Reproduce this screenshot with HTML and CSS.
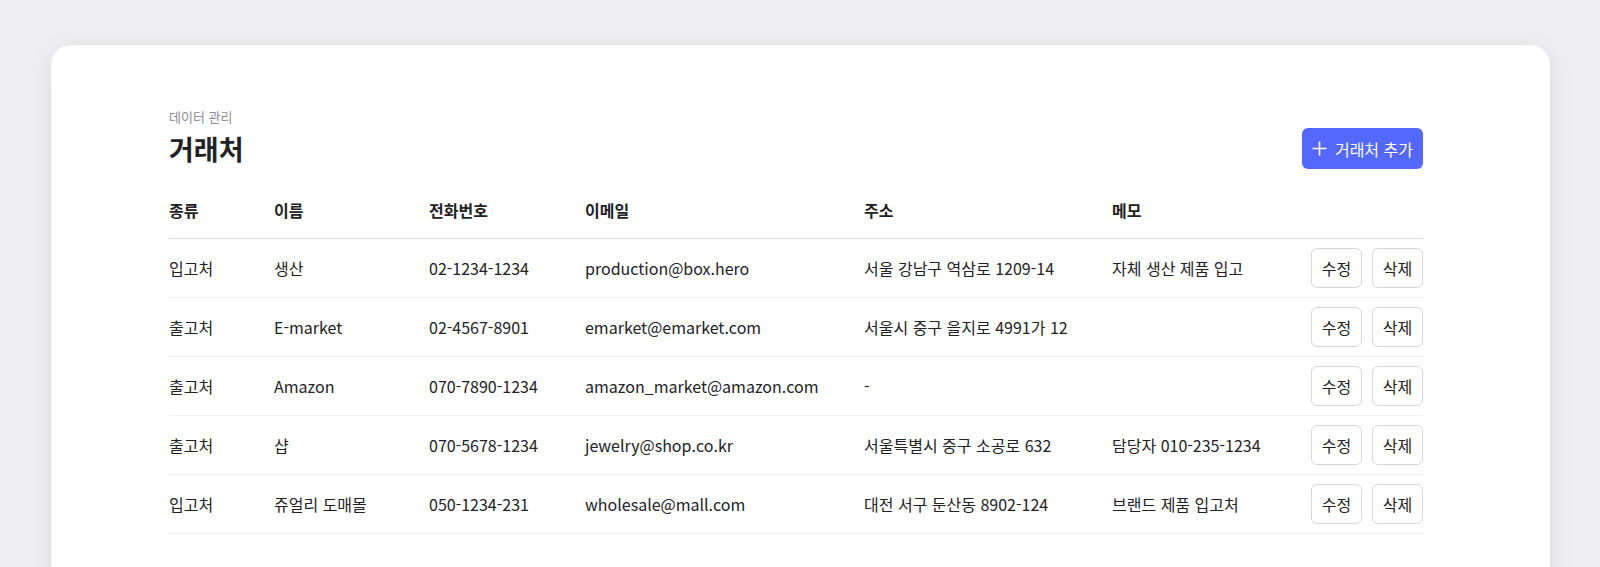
FILE: index.html
```html
<!DOCTYPE html>
<html lang="ko">
<head>
<meta charset="utf-8">
<title>거래처</title>
<link rel="stylesheet" href="styles.css">
</head>
<body>
<div class="page">
  <section class="card">
    <header class="head">
      <div class="titles">
        <div class="crumb">데이터 관리</div>
        <h1 class="title">거래처</h1>
      </div>
      <button class="add-btn">
        <svg class="plus" width="15" height="15" viewBox="0 0 15 15"><path d="M7.5 0.5V14.5M0.5 7.5H14.5" stroke="#fff" stroke-width="1.6" fill="none"/></svg>
        <span>거래처 추가</span>
      </button>
    </header>
    <div class="table">
      <div class="row th">
        <div>종류</div><div>이름</div><div>전화번호</div><div>이메일</div><div>주소</div><div>메모</div><div></div>
      </div>
      <div class="row">
        <div>입고처</div><div>생산</div><div>02-1234-1234</div><div>production@box.hero</div><div>서울 강남구 역삼로 1209-14</div><div>자체 생산 제품 입고</div>
        <div class="actions"><button class="btn">수정</button><button class="btn">삭제</button></div>
      </div>
      <div class="row">
        <div>출고처</div><div>E-market</div><div>02-4567-8901</div><div>emarket@emarket.com</div><div>서울시 중구 을지로 4991가 12</div><div></div>
        <div class="actions"><button class="btn">수정</button><button class="btn">삭제</button></div>
      </div>
      <div class="row">
        <div>출고처</div><div>Amazon</div><div>070-7890-1234</div><div>amazon_market@amazon.com</div><div>-</div><div></div>
        <div class="actions"><button class="btn">수정</button><button class="btn">삭제</button></div>
      </div>
      <div class="row">
        <div>출고처</div><div>샵</div><div>070-5678-1234</div><div>jewelry@shop.co.kr</div><div>서울특별시 중구 소공로 632</div><div>담당자 010-235-1234</div>
        <div class="actions"><button class="btn">수정</button><button class="btn">삭제</button></div>
      </div>
      <div class="row">
        <div>입고처</div><div>쥬얼리 도매몰</div><div>050-1234-231</div><div>wholesale@mall.com</div><div>대전 서구 둔산동 8902-124</div><div>브랜드 제품 입고처</div>
        <div class="actions"><button class="btn">수정</button><button class="btn">삭제</button></div>
      </div>
    </div>
  </section>
</div>
</body>
</html>
```

FILE: styles.css
```css
* { box-sizing: border-box; }
html, body { margin: 0; padding: 0; }
body {
  background: #efeff1;
  font-family: "Noto Sans CJK KR", "Noto Sans", sans-serif;
  color: #222226;
  overflow: hidden;
  height: 567px;
}
.page {
  padding: 45px 50px 0 51px;
}
.card {
  background: #fff;
  border-radius: 20px;
  box-shadow: 0 4px 24px rgba(0, 0, 0, 0.09);
  padding: 63px 127px 40px 118px;
  min-height: 600px;
}
.head {
  display: flex;
  justify-content: space-between;
  align-items: flex-end;
}
.crumb {
  font-size: 13px;
  line-height: 18px;
  color: #8e8e99;
}
.title {
  margin: 3px 0 0;
  font-size: 27px;
  line-height: 40px;
  font-weight: 700;
  color: #222226;
}
.add-btn {
  display: flex;
  align-items: center;
  gap: 8px;
  height: 41px;
  padding: 0 10px 0 10px;
  border: none;
  border-radius: 6px;
  background: #5468ff;
  color: #fff;
  font-family: inherit;
  font-size: 16px;
}
.table {
  margin-top: 20px;
}
.row {
  display: grid;
  grid-template-columns: 105px 155px 156px 279px 248px 1fr auto;
  align-items: center;
  font-size: 16px;
  line-height: 22px;
  border-bottom: 1px solid #efeff2;
  padding: 9px 0;
  min-height: 59px;
}
.row.th {
  font-weight: 700;
  padding: 10px 0 17px;
  min-height: 0;
  border-bottom: 1px solid #dedee4;
}
.actions {
  display: flex;
  gap: 10px;
}
.btn {
  width: 51px;
  height: 40px;
  padding: 0;
  border: 1px solid #d6d6dd;
  border-radius: 6px;
  background: #fff;
  color: #222226;
  font-family: inherit;
  font-size: 16px;
}
```
